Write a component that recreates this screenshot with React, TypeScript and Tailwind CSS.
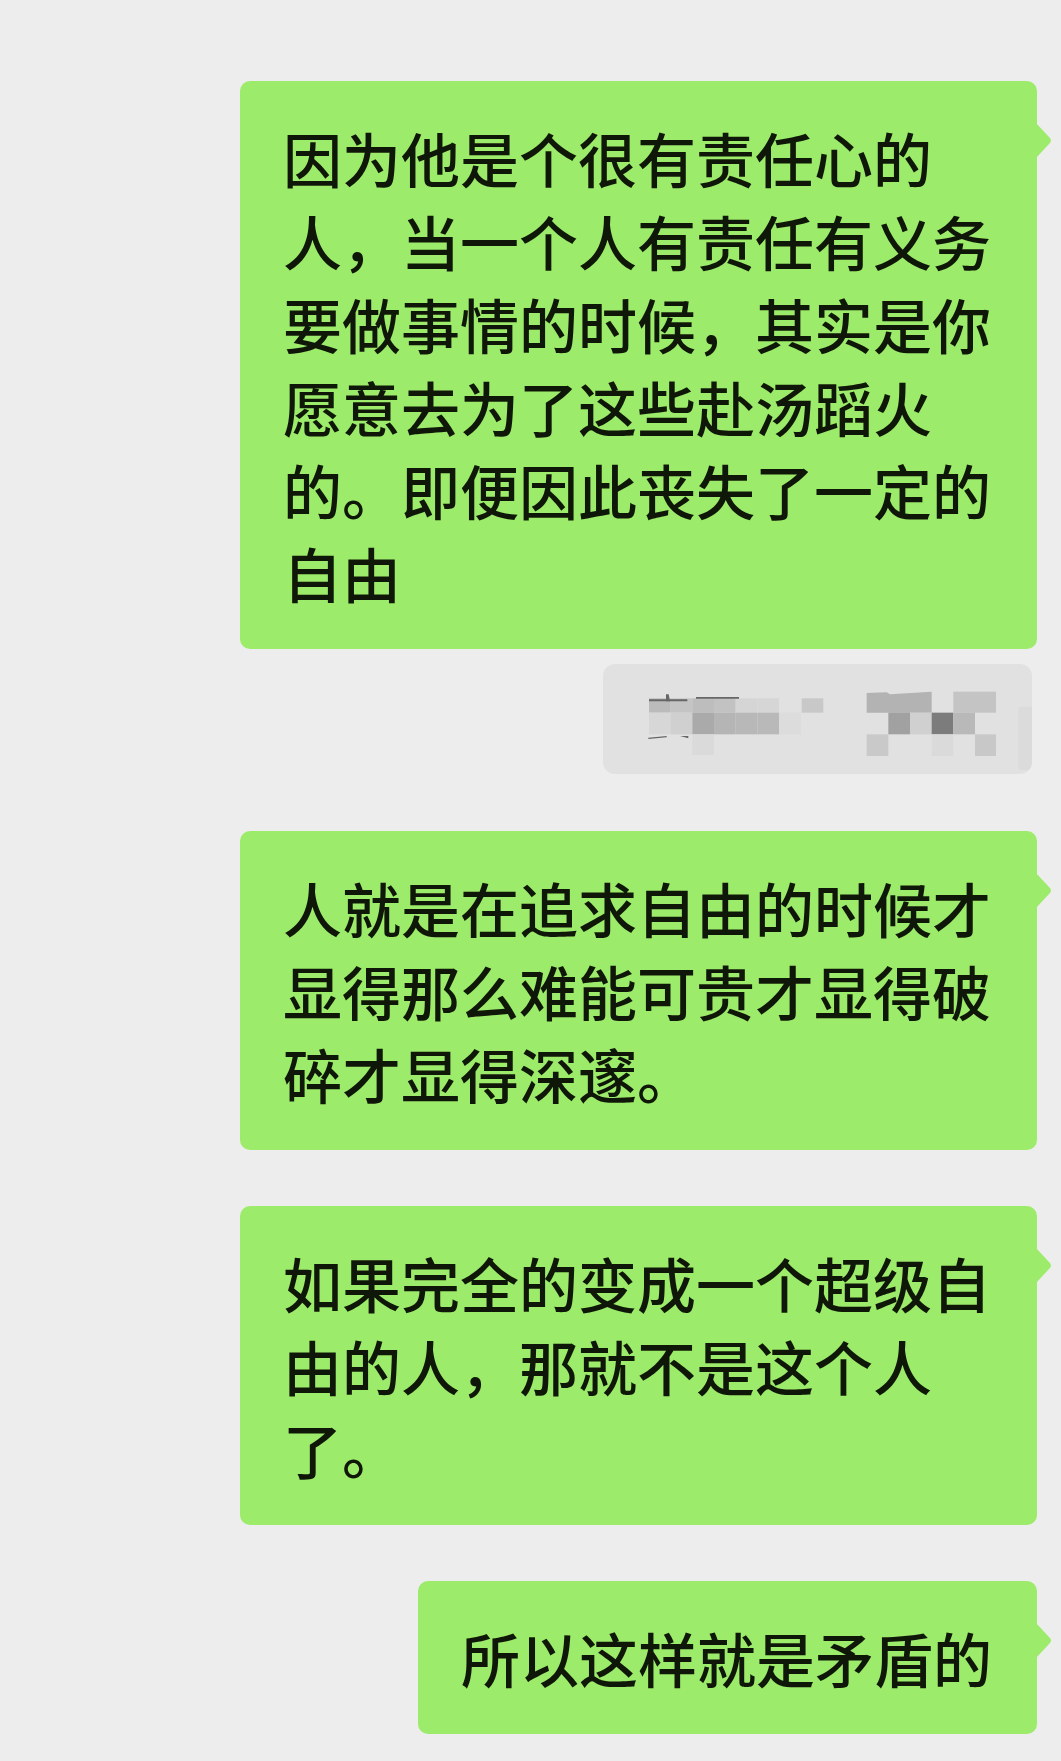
import React from 'react';

const messages = [
    '因为他是个很有责任心的人，当一个人有责任有义务要做事情的时候，其实是你愿意去为了这些赴汤蹈火的。即便因此丧失了一定的自由',
    '人就是在追求自由的时候才显得那么难能可贵才显得破碎才显得深邃。',
    '如果完全的变成一个超级自由的人，那就不是这个人了。',
    '所以这样就是矛盾的',
];

function Tail() {
    return (
        <svg className="absolute top-[42px] -right-[16px]" width="17" height="35" viewBox="0 0 17 35">
            <path d="M0 0 L0 35 L13 21 Q17 17.5 13 14 Z" fill="#9deb6a" />
        </svg>
    );
}

function Bubble({ text, className = '' }: { text: string; className?: string }) {
    return (
        <div className={`relative max-w-[797px] rounded-[10px] bg-[#9deb6a] pl-[43px] pr-[45px] py-[35px] ${className}`}>
            <p className="text-[59px] leading-[83px] font-medium text-[#0f1708] break-all">{text}</p>
            <Tail />
        </div>
    );
}

// blurred quote / image preview under the first message
function MosaicCard() {
    return (
        <div className="mt-[15px] mr-[5px] w-[429px] h-[110px] rounded-[12px] bg-[#e1e1e1] overflow-hidden">
            <svg width="429" height="110" viewBox="9 27 1287 330">
                {/* left group */}
                <rect x="147" y="130" width="65" height="43" fill="#bbbbbb" />
                <rect x="212" y="130" width="65" height="43" fill="#c4c4c4" />
                <rect x="277" y="130" width="65" height="43" fill="#bdbdbd" />
                <rect x="342" y="130" width="65" height="43" fill="#c2c2c2" />
                <rect x="407" y="130" width="65" height="43" fill="#d5d5d5" />
                <rect x="472" y="130" width="65" height="43" fill="#d6d6d6" />
                <rect x="605" y="130" width="65" height="43" fill="#c8c8c8" />
                <rect x="147" y="173" width="65" height="65" fill="#d7d7d7" />
                <rect x="212" y="173" width="65" height="65" fill="#d0d0d0" />
                <rect x="277" y="173" width="65" height="65" fill="#aaaaaa" />
                <rect x="342" y="173" width="65" height="65" fill="#b5b5b5" />
                <rect x="407" y="173" width="65" height="65" fill="#b8b8b8" />
                <rect x="472" y="173" width="65" height="65" fill="#b9b9b9" />
                <rect x="537" y="173" width="65" height="65" fill="#dcdcdc" />
                <rect x="277" y="238" width="65" height="62" fill="#dadada" />
                <path d="M147 133 L262 133 L262 139 L147 139 Z" fill="#666" />
                <path d="M198 118 L206 118 L210 139 L198 139 Z" fill="#666" />
                <path d="M288 126 L417 126 L417 131 L288 131 Z" fill="#666" />
                <path d="M145 248 L200 243 L200 247 L145 252 Z" fill="#666" />
                <path d="M240 243 L265 243 L265 250 Z" fill="#666" />
                {/* right group */}
                <path d="M800 114 L860 112 L870 118 L995 110 L995 173 L800 173 Z" fill="#b3b3b3" />
                <rect x="1060" y="110" width="128" height="63" fill="#c4c4c4" />
                <rect x="865" y="173" width="65" height="65" fill="#a1a1a1" />
                <rect x="930" y="173" width="65" height="65" fill="#d0d0d0" />
                <rect x="995" y="173" width="65" height="65" fill="#7c7c7c" />
                <rect x="1060" y="173" width="65" height="65" fill="#b9b9b9" />
                <rect x="800" y="238" width="65" height="65" fill="#c9c9c9" />
                <rect x="995" y="238" width="65" height="65" fill="#dadada" />
                <rect x="1125" y="238" width="63" height="65" fill="#c8c8c8" />
                <rect x="1255" y="155" width="60" height="190" rx="10" fill="#dbdbdb" />
            </svg>
        </div>
    );
}

export default function App() {
    return (
        <div
            className="min-h-[1761px] w-full bg-[#ededed] flex flex-col items-end pt-[81px] pr-[24px]"
            style={{ fontFamily: '"Noto Sans CJK SC", "Noto Sans", sans-serif' }}
        >
            <Bubble text={messages[0]} />
            <MosaicCard />
            <Bubble text={messages[1]} className="mt-[57px]" />
            <Bubble text={messages[2]} className="mt-[56px]" />
            <Bubble text={messages[3]} className="mt-[56px]" />
        </div>
    );
}
